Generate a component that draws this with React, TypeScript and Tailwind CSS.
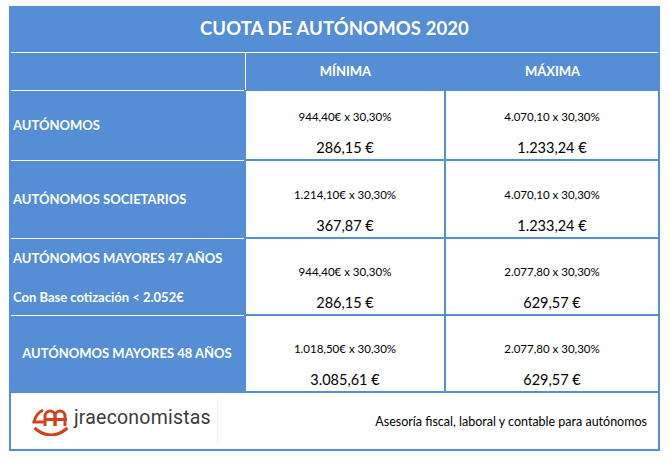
import React from "react";

type RowProps = {
  h: string;
  label: React.ReactNode;
  f1: string;
  r1: string;
  f2: string;
  r2: string;
  center?: boolean;
};

function Cell({ f, r }: { f: string; r: string }) {
  return (
    <div className="h-full bg-white flex flex-col items-center justify-end pb-[1px] text-black">
      <div className="text-[11.5px] leading-[20px]">{f}</div>
      <div className="h-[11px]" />
      <div className="text-[14.5px] leading-[20px]">{r}</div>
    </div>
  );
}

function Row({ h, label, f1, r1, f2, r2, center }: RowProps) {
  return (
    <div className={`flex ${h}`}>
      <div className="w-[236px] flex flex-col">
        <div className="h-px ml-[2px] w-[233px] bg-white" />
        <div
          className={
            center
              ? "flex-1 flex items-center justify-center text-white font-bold text-[13px]"
              : "flex-1 flex flex-col justify-center pl-[4px] text-white font-bold text-[13px]"
          }
        >
          {label}
        </div>
      </div>
      <div className="w-[200px] px-px py-px">
        <Cell f={f1} r={r1} />
      </div>
      <div className="flex-1 pl-px pr-[2px] py-px">
        <Cell f={f2} r={r2} />
      </div>
    </div>
  );
}

function Logo() {
  return (
    <svg width="40" height="30" viewBox="0 0 40 30" fill="none" stroke="#d6401d" strokeWidth="3" strokeLinecap="butt">
      <path d="M3 17 Q4 8 12 4" />
      <path d="M1.5 16 H15" />
      <path d="M14 20 V10 A5 5 0 0 1 24 10 V20" />
      <path d="M24 20 V10 A5 5 0 0 1 34 10 V20" />
      <path d="M13 13.5 H36" />
      <path d="M3.5 22 Q20 36 36.5 22" />
    </svg>
  );
}

export default function App() {
  return (
    <div className="w-[670px] h-[462px] bg-white font-[Lato,sans-serif] pt-[6px] pl-[9px]">
      <div className="w-[651px] h-[445px] bg-[#558ed5] flex flex-col">
        <div className="h-[46px] flex items-center justify-center text-white font-bold text-[18.5px] tracking-[0.1px]">
          CUOTA DE AUTÓNOMOS 2020
        </div>
        <div className="h-px mx-[2px] bg-white" />
        <div className="h-[37px] flex">
          <div className="w-[236px]" />
          <div className="w-px bg-white" />
          <div className="w-[199px] flex items-center justify-center text-white font-bold text-[13px]">
            MÍNIMA
          </div>
          <div className="flex-1 flex items-center justify-center text-white font-bold text-[13px]">
            MÁXIMA
          </div>
        </div>
        <Row
          h="h-[70px]"
          label="AUTÓNOMOS"
          f1="944,40€ x 30,30%"
          r1="286,15 €"
          f2="4.070,10 x 30,30%"
          r2="1.233,24 €"
        />
        <Row
          h="h-[78px]"
          label="AUTÓNOMOS SOCIETARIOS"
          f1="1.214,10€ x 30,30%"
          r1="367,87 €"
          f2="4.070,10 x 30,30%"
          r2="1.233,24 €"
        />
        <Row
          h="h-[77px]"
          label={
            <>
              <div className="leading-[20px]">AUTÓNOMOS MAYORES 47 AÑOS</div>
              <div className="h-[19px]" />
              <div className="leading-[20px]">Con Base cotización &lt; 2.052€</div>
            </>
          }
          f1="944,40€ x 30,30%"
          r1="286,15 €"
          f2="2.077,80 x 30,30%"
          r2="629,57 €"
        />
        <Row
          h="h-[77px]"
          center
          label="AUTÓNOMOS MAYORES 48 AÑOS"
          f1="1.018,50€ x 30,30%"
          r1="3.085,61 €"
          f2="2.077,80 x 30,30%"
          r2="629,57 €"
        />
        <div className="mt-px mx-[2px] mb-[2px] flex-1 bg-white flex items-center">
          <div className="pl-[20px] flex items-center h-full">
            <Logo />
            <span className="ml-[3px] -mt-[6px] font-[Roboto,sans-serif] text-[19.5px] text-[#3b3b3b] tracking-[0.2px]">
              jraeconomistas
            </span>
          </div>
          <div className="ml-[6px] w-px h-[46px] bg-[#f0f0f0]" />
          <div className="flex-1 text-right pr-[11px] pt-[3px] text-[12.5px] text-black">
            Asesoría fiscal, laboral y contable para autónomos
          </div>
        </div>
      </div>
    </div>
  );
}
